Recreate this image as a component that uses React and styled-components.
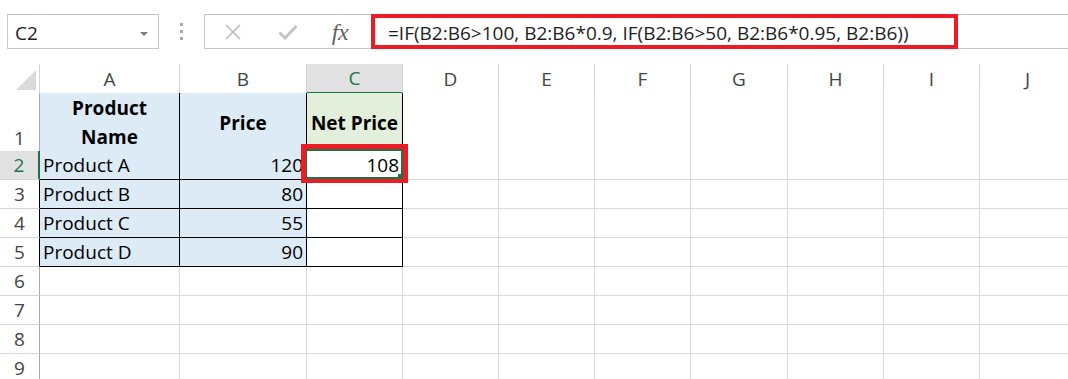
import React from 'react';
import styled, { createGlobalStyle } from 'styled-components';

const GREEN = '#217346';
const RED = '#ed1c24';
const GRID = '#d9d9d9';
const HEAD_LINE = '#d4d4d4';
const HEAD_EDGE = '#ababab';

const GlobalStyle = createGlobalStyle`
  html, body { margin: 0; padding: 0; background: #fff; }
  body { font-family: "Open Sans", "Liberation Sans", sans-serif; overflow: hidden; }
  *, *::before, *::after { box-sizing: border-box; }
`;

const Page = styled.div`
  width: 1068px;
  height: 379px;
  overflow: hidden;
  background: #fff;
`;

const Toolbar = styled.div`
  display: flex;
  align-items: stretch;
  height: 35px;
  margin-top: 14px;
  padding-left: 7px;
`;

const NameBox = styled.div`
  flex: 0 0 152px;
  border: 1px solid #c6c6c6;
  display: flex;
  align-items: center;
  justify-content: space-between;
  padding: 3px 10px 0 7px;
  font-size: 19px;
  color: #222;
`;

const Caret = styled.span`
  width: 0;
  height: 0;
  border-left: 4px solid transparent;
  border-right: 4px solid transparent;
  border-top: 4px solid #7a7a7a;
  margin-top: 1px;
`;

const Grip = styled.div`
  flex: 0 0 45px;
  display: flex;
  flex-direction: column;
  align-items: center;
  justify-content: center;
  gap: 4px;
`;

const Dot = styled.span`
  width: 3px;
  height: 3px;
  background: #a8a8a8;
`;

const ButtonGroup = styled.div`
  flex: 0 0 167px;
  display: flex;
  border: 1px solid #c6c6c6;
  border-right: none;
`;

const ToolButton = styled.div`
  flex: 0 0 ${p => p.$w}px;
  display: flex;
  align-items: center;
  justify-content: center;
`;

const FxText = styled.span`
  font-family: "Liberation Serif", "DejaVu Serif", serif;
  font-style: italic;
  font-size: 24px;
  color: #5f5f5f;
  letter-spacing: -0.5px;
  margin-top: 1px;
`;

const FormulaField = styled.div`
  flex: 1;
  display: flex;
  min-width: 0;
`;

const RedFrame = styled.div`
  flex: 0 0 587px;
  border: 4px solid ${RED};
  display: flex;
  align-items: center;
  padding: 3px 0 0 13px;
  font-size: 19px;
  color: #1e1e1e;
  white-space: nowrap;
  background: #fff;
`;

const FieldRest = styled.div`
  flex: 1;
  border-top: 1px solid #c6c6c6;
  border-bottom: 1px solid #c6c6c6;
`;

const Sheet = styled.div`
  margin-top: 15px;
  display: flex;
  flex-direction: column;
`;

const Row = styled.div`
  display: grid;
  grid-template-columns: 40px 140px 127px 96px 96px 96px 96px 97px 96px 96px 96px;
  height: ${p => p.$h}px;
`;

const Corner = styled.div`
  border-right: 1px solid ${HEAD_LINE};
  border-bottom: 1px solid ${HEAD_EDGE};
  display: flex;
  align-items: flex-end;
  justify-content: flex-end;
  padding: 0 3px 3px 0;
`;

const CornerTriangle = styled.span`
  width: 20px;
  height: 20px;
  background: #dadada;
  clip-path: polygon(100% 0, 100% 100%, 0 100%);
`;

const ColHead = styled.div`
  border-right: 1px solid ${HEAD_LINE};
  border-bottom: ${p => (p.$active ? `2px solid ${GREEN}` : `1px solid ${HEAD_EDGE}`)};
  background: ${p => (p.$active ? '#e1e1e1' : '#fff')};
  color: ${p => (p.$active ? GREEN : '#444')};
  display: flex;
  align-items: center;
  justify-content: center;
  font-size: 19px;
  line-height: 28px;
`;

const RowHead = styled.div`
  border-right: ${p => p.$edge};
  border-bottom: 1px solid ${HEAD_LINE};
  background: ${p => (p.$active ? '#e1e1e1' : '#fff')};
  color: ${p => (p.$active ? GREEN : '#444')};
  display: flex;
  align-items: flex-end;
  justify-content: center;
  font-size: 19px;
  line-height: 28px;
`;

const Cell = styled.div`
  position: relative;
  border-right: 1px solid ${p => p.$rc};
  border-bottom: 1px solid ${p => p.$bc};
  background: ${p => p.$fill};
  display: flex;
  align-items: ${p => (p.$bold ? 'center' : 'flex-end')};
  justify-content: ${p => p.$align};
  padding: 0 3px;
  font-size: 19px;
  line-height: 28px;
  font-weight: ${p => (p.$bold ? 700 : 400)};
  color: #000;
  white-space: nowrap;
`;

const HeadText = styled.div`
  text-align: center;
  line-height: 29px;
  margin-top: 1px;
`;

const Selection = styled.span`
  position: absolute;
  left: -2px;
  top: -2px;
  right: -1px;
  bottom: 0;
  border: 2px solid ${GREEN};
  pointer-events: none;
`;

const FillHandle = styled.span`
  position: absolute;
  right: -1px;
  bottom: 0;
  width: 5px;
  height: 5px;
  background: ${GREEN};
`;

const Highlight = styled.span`
  position: absolute;
  left: -6px;
  top: -7px;
  right: -6px;
  bottom: -4px;
  border-style: solid;
  border-color: ${RED};
  border-width: 5px 5px 4px 5px;
  z-index: 2;
  pointer-events: none;
`;

const COLS = ['A', 'B', 'C', 'D', 'E', 'F', 'G', 'H', 'I', 'J'];

const DATA = {
  1: { A: ['Product', 'Name'], B: ['Price'], C: ['Net Price'] },
  2: { A: 'Product A', B: '120', C: '108' },
  3: { A: 'Product B', B: '80' },
  4: { A: 'Product C', B: '55' },
  5: { A: 'Product D', B: '90' },
};

const LIGHT_BLUE = '#ddebf7';
const LIGHT_GREEN = '#e2efda';

function cellProps(r, c) {
  const inTable = r <= 5 && ['A', 'B', 'C'].includes(c);
  let fill = '#fff';
  if (inTable && (c === 'A' || c === 'B')) fill = LIGHT_BLUE;
  if (r === 1 && c === 'C') fill = LIGHT_GREEN;
  return {
    $fill: fill,
    $rc: inTable ? '#000' : GRID,
    $bc: inTable ? '#000' : GRID,
    $bold: r === 1 && inTable,
    $align: r === 1 ? 'center' : c === 'A' ? 'flex-start' : 'flex-end',
  };
}

function rowEdge(r) {
  if (r === 2) return `2px solid ${GREEN}`;
  if (r >= 3 && r <= 5) return '1px solid #000';
  return `1px solid ${HEAD_EDGE}`;
}

const XIcon = () => (
  <svg width="18" height="18" viewBox="0 0 18 18">
    <path d="M2 2 L16 16 M16 2 L2 16" stroke="#bdbdbd" strokeWidth="1.7" fill="none" />
  </svg>
);

const CheckIcon = () => (
  <svg width="20" height="16" viewBox="0 0 20 16">
    <path d="M1.5 8.5 L7 14 L18.5 2" stroke="#c4c4c4" strokeWidth="3" fill="none" />
  </svg>
);

export default function App() {
  const rows = [1, 2, 3, 4, 5, 6, 7, 8, 9];
  return (
    <Page>
      <GlobalStyle />
      <Toolbar>
        <NameBox>
          <span>C2</span>
          <Caret />
        </NameBox>
        <Grip>
          <Dot />
          <Dot />
          <Dot />
        </Grip>
        <ButtonGroup>
          <ToolButton $w={55}>
            <XIcon />
          </ToolButton>
          <ToolButton $w={55}>
            <CheckIcon />
          </ToolButton>
          <ToolButton $w={50}>
            <FxText>fx</FxText>
          </ToolButton>
        </ButtonGroup>
        <FormulaField>
          <RedFrame>=IF(B2:B6&gt;100, B2:B6*0.9, IF(B2:B6&gt;50, B2:B6*0.95, B2:B6))</RedFrame>
          <FieldRest />
        </FormulaField>
      </Toolbar>

      <Sheet>
        <Row $h={29}>
          <Corner>
            <CornerTriangle />
          </Corner>
          {COLS.map(c => (
            <ColHead key={c} $active={c === 'C'}>
              {c}
            </ColHead>
          ))}
        </Row>
        {rows.map(r => (
          <Row key={r} $h={r === 1 ? 58 : 29}>
            <RowHead $edge={rowEdge(r)} $active={r === 2}>
              {r}
            </RowHead>
            {COLS.map(c => {
              const v = DATA[r] && DATA[r][c];
              const p = cellProps(r, c);
              const active = r === 2 && c === 'C';
              return (
                <Cell key={c} {...p}>
                  {Array.isArray(v) ? (
                    <HeadText>
                      {v.map(line => (
                        <div key={line}>{line}</div>
                      ))}
                    </HeadText>
                  ) : (
                    v
                  )}
                  {active && (
                    <>
                      <Selection />
                      <FillHandle />
                      <Highlight />
                    </>
                  )}
                </Cell>
              );
            })}
          </Row>
        ))}
      </Sheet>
    </Page>
  );
}
